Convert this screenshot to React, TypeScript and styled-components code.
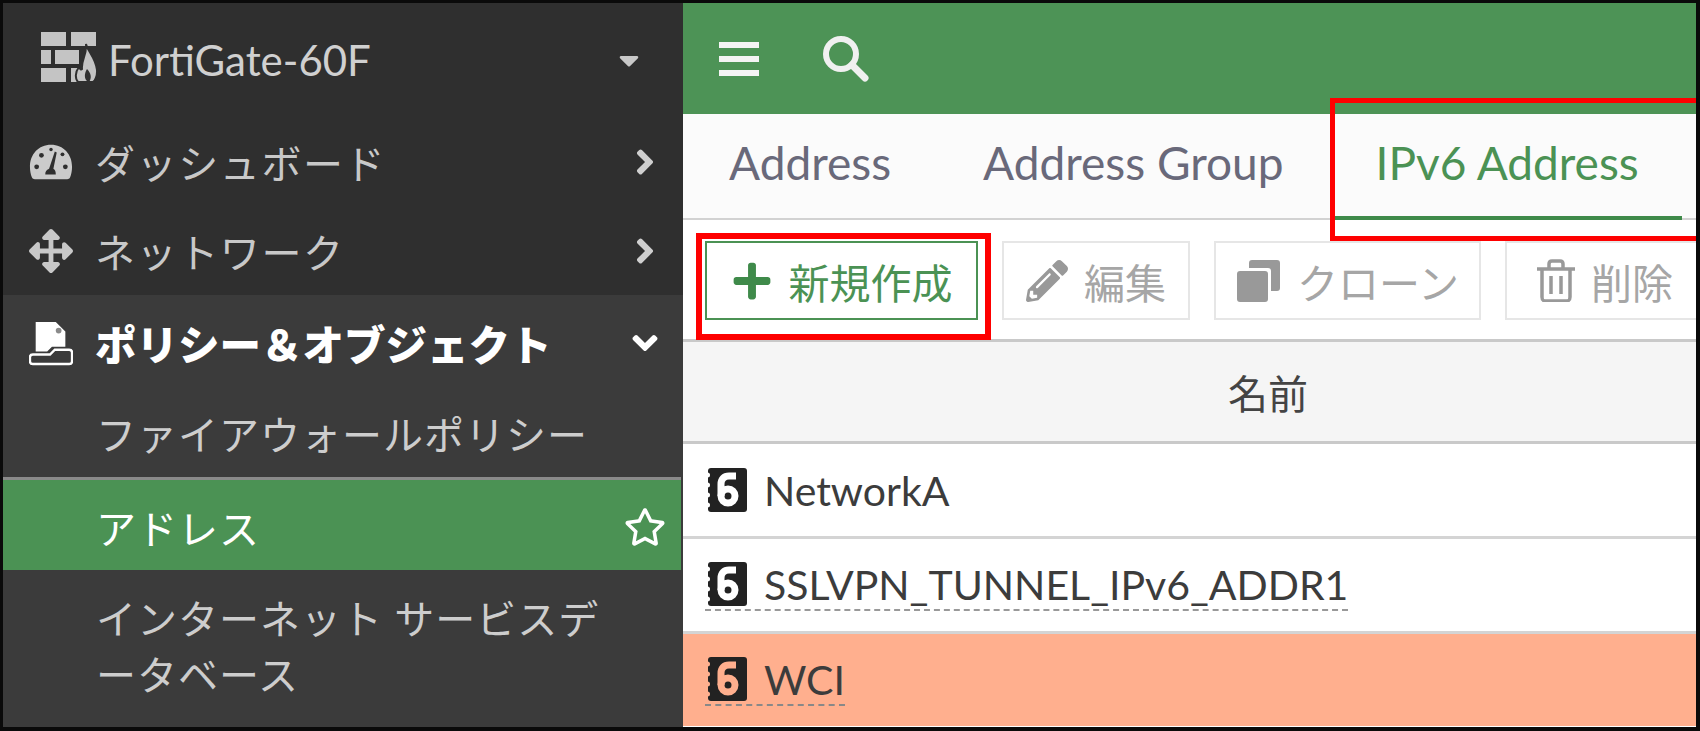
import React from "react";
import styled, { createGlobalStyle } from "styled-components";
import { FaArrowsAlt, FaCaretDown, FaPencilAlt, FaPlus, FaRegStar, FaAngleRight, FaAngleDown } from "react-icons/fa";

const Global = createGlobalStyle`
  html, body { margin: 0; padding: 0; width: 1700px; height: 731px; overflow: hidden; background: #000; }
  * { box-sizing: border-box; }
`;
const font = `"Lato", "Noto Sans CJK JP", sans-serif`;

const Frame = styled.div`
  position: relative; width: 1700px; height: 731px; border: 3px solid #0a0a0a; border-right-width: 4px; border-bottom-width: 4px;
  display: flex; background: #fff; font-family: ${font}; overflow: hidden;
`;
const Sidebar = styled.nav`
  width: 680px; flex: none; background: #2f2f2f; color: #c8c8c8; display: flex; flex-direction: column;
`;
const Brand = styled.div`
  height: 115px; display: flex; align-items: center; padding: 0 38px 1px 37px; font-size: 42px; color: #d0d0d0;
`;
const BrandIcon = styled.span`display: flex; margin-bottom: 6px;`;
const BrandName = styled.span`flex: 1; margin-left: 10px;`;
const MenuRow = styled.div<{ $h: number; $top?: number }>`
  height: ${p => p.$h}px; display: flex; align-items: center; padding: ${p => p.$top || 0}px 18px 0 26px; font-size: 40px;
`;
const Group = styled.div`background: #3b3b3b; flex: 1; display: flex; flex-direction: column;`;
const IconSlot = styled.span`width: 44px; height: 48px; flex: none; display: flex; align-items: center; justify-content: center; margin-right: 22px; font-size: 44px;`;
const MenuText = styled.span<{ $bold?: boolean }>`
  flex: 1; font-weight: ${p => (p.$bold ? 900 : 400)}; color: ${p => (p.$bold ? "#fff" : "inherit")};
  font-size: ${p => (p.$bold ? 41.5 : 40)}px;
  letter-spacing: ${p => (p.$bold ? "0" : "1.6px")};
`;
const Arrow = styled.span<{ $white?: boolean }>`
  font-size: 40px; display: flex; color: ${p => (p.$white ? "#fff" : "#cfcfcf")};
`;
const Caret = styled.span`font-size: 32px; display: flex; color: #c8c8c8;`;
const SubRow = styled.div`
  height: 90px; display: flex; align-items: center; padding: 1px 0 0 93px; font-size: 40px; letter-spacing: 1px; color: #cdcdcd;
`;
const ActiveRow = styled.div`
  height: 93px; background: #4b9254; border-top: 3px solid #8a8a8a; display: flex; align-items: center;
  padding: 3px 15px 0 93px; font-size: 40px; letter-spacing: 1px; color: #fff; margin-right: 2px;
`;
const Grow = styled.span`flex: 1;`;
const WrapRow = styled.div`
  padding: 21px 60px 0 93px; font-size: 40px; letter-spacing: 1px; line-height: 56px; color: #cdcdcd;
`;

const Main = styled.main`flex: 1; min-width: 0; display: flex; flex-direction: column;`;
const TopBar = styled.header`
  height: 111px; flex: none; background: #4d9356; color: #fff; display: flex; align-items: center; padding: 0 0 0 36px; gap: 64px;
`;
const Tabs = styled.div`
  height: 106px; flex: none; background: #fbfbfb; border-bottom: 2px solid #d2d2d2; display: flex; align-items: center; padding: 0 0 8px 46px; font-size: 46px; color: #666;
`;
const Tab = styled.span<{ $active?: boolean; $gap: number }>`
  margin-right: ${p => p.$gap}px; color: ${p => (p.$active ? "#4b9254" : "#69697a")};
`;
const Underline = styled.div`position: absolute; left: 1332px; top: 213px; width: 347px; height: 4px; background: #3f8a4a;`;
const Toolbar = styled.div`
  height: 122px; flex: none; background: #fff; border-bottom: 3px solid #c9c9c9; display: flex; padding: 21px 0 0 22px; gap: 24px; align-items: flex-start;
`;
const Button = styled.div<{ $primary?: boolean; $w: number }>`
  height: 79px; width: ${p => p.$w}px; flex: none; display: flex; align-items: center; justify-content: center; gap: 16px;
  border: 2px solid ${p => (p.$primary ? "#4b9254" : "#e6e6e6")};
  color: ${p => (p.$primary ? "#4b9254" : "#a6a6a6")}; font-size: 41px; background: #fff;
`;
const BtnIcon = styled.span<{ $primary?: boolean }>`display: flex; font-size: 42px; color: ${p => (p.$primary ? "#3f8a4a" : "#999")};`;
const HeadRow = styled.div`
  height: 102px; flex: none; background: #f5f5f5; border-bottom: 3px solid #c9c9c9; display: flex; align-items: center;
  padding-left: 545px; font-size: 40px; color: #444;
`;
const Row = styled.div<{ $bg?: string }>`
  height: ${p => (p.$bg ? 92 : 95)}px; flex: none; background: ${p => p.$bg || "#fff"}; display: flex; align-items: center; padding-left: 22px;
  border-bottom: ${p => (p.$bg ? "none" : "3px solid #d4d4d4")}; font-size: 41px; color: #3c3c3c;
`;
const Dashed = styled.span<{ $dim?: boolean }>`
  display: inline-flex; align-items: center; gap: 17px; border-bottom: 2px dashed ${p => (p.$dim ? "#888" : "#999")}; height: 52px;
`;
const Plain = styled.span`display: inline-flex; align-items: center; gap: 17px; height: 52px;`;
const RedBox = styled.div<{ $x: number; $y: number; $w: number; $h: number; $t: number; $open?: boolean }>`
  position: absolute; left: ${p => p.$x}px; top: ${p => p.$y}px; width: ${p => p.$w}px; height: ${p => p.$h}px;
  border: ${p => p.$t}px solid #fe0000; ${p => (p.$open ? "border-right: none;" : "")}
`;

const FirewallIcon = () => (
  <svg width="58" height="50" viewBox="0 0 58 50">
    <g fill="#c4c4c4">
      <rect x="1" y="0" width="25" height="14" /><rect x="31" y="0" width="25" height="14" />
      <rect x="1" y="18" width="10" height="14" /><rect x="15" y="18" width="24" height="14" />
      <rect x="1" y="36" width="25" height="14" /><rect x="31" y="36" width="7" height="14" />
      <path d="M46 12c1 6 10 14 11 26 .4 6-2 11-4 12H38c-3-3-3-10 1-15 1 2 2 3 3 2-1-9 5-14 4-25z" stroke="#2f2f2f" strokeWidth="2" />
      <path d="M48 50c-4-3-4-8-1-13 4 4 5 9 2 13z" fill="#2f2f2f" />
    </g>
  </svg>
);
const GaugeIcon = () => (
  <svg width="46" height="38" viewBox="0 0 46 38">
    <path d="M23 1C10 1 1 11 1 24c0 4 .7 8 2 11 .5 1.500 2 2 3 2h34c1 0 2.500-.5 3-2 1.300-3 2-7 2-11C45 11 36 1 23 1z" fill="#cbcbcb" />
    <g fill="#2f2f2f">
      <circle cx="8" cy="24" r="2.500" /><circle cx="13" cy="12" r="2.500" /><circle cx="23" cy="6" r="1.800" /><circle cx="35" cy="11" r="2" /><circle cx="38" cy="24" r="2.500" />
      <path d="M27 8l2 1-3.500 17c2 1 2.500 3 2.500 6H17c0-3 1-5 4-6z" />
    </g>
  </svg>
);
const PolicyIcon = () => (
  <svg width="46" height="46" viewBox="0 0 46 46">
    <path d="M7 1h21l10 10v16H24l-5 5H7z" fill="#fff" />
    <circle cx="31" cy="10" r="3" fill="#8a8a8a" />
    <path d="M27 30h15c2 0 3 1 3 3v9c0 2-1 3-3 3H4c-2 0-3-1-3-3v-4c0-2 1-3 3-3h18z" fill="none" stroke="#fff" strokeWidth="2.500" />
  </svg>
);
const V6Icon = ({ bg }: { bg: string }) => (
  <svg width="42" height="44" viewBox="0 0 42 44">
    <rect x="3" y="0" width="39" height="44" rx="3" fill="#222" />
    <g fill={bg}>
      <circle cx="2.500" cy="7" r="2.500" /><circle cx="2.500" cy="17" r="2.500" /><circle cx="2.500" cy="27" r="2.500" /><circle cx="2.500" cy="37" r="2.500" />
    </g>
    <g fill="none" stroke={bg} strokeWidth="7">
      <circle cx="23" cy="28" r="7" />
      <path d="M16 28V16c0-5 3-8 8-8h7" />
    </g>
  </svg>
);
const BarsIcon = () => (
  <svg width="40" height="34" viewBox="0 0 40 34">
    <g fill="#f4f4f4"><rect x="0" y="0" width="40" height="6" /><rect x="0" y="14" width="40" height="6" /><rect x="0" y="28" width="40" height="6" /></g>
  </svg>
);
const SearchIcon = () => (
  <svg width="46" height="46" viewBox="0 0 46 46">
    <circle cx="18" cy="18" r="15" fill="none" stroke="#f0f0f0" strokeWidth="6" />
    <path d="M29 29l13 13" stroke="#f0f0f0" strokeWidth="7" strokeLinecap="round" />
  </svg>
);
const CloneIcon = () => (
  <svg width="45" height="44" viewBox="0 0 45 44">
    <path d="M16 1h25c2 0 3 1 3 3v25c0 2-1 3-3 3h-6V12c0-2-1-3-3-3H13V4c0-2 1-3 3-3z" fill="#999" />
    <rect x="1" y="12" width="31" height="31" rx="3" fill="#999" />
  </svg>
);
const TrashIcon = () => (
  <svg width="38" height="43" viewBox="0 0 38 43" fill="none" stroke="#999" strokeWidth="3.500">
    <path d="M0 10h38M5 10v28c0 3 1 4 4 4h20c3 0 4-1 4-4V10M12 10V5c0-2 1-3 3-3h8c2 0 3 1 3 3v5M14 17v18M24 17v18" />
  </svg>
);

export default function App() {
  return (
    <>
      <Global />
      <Frame>
        <Sidebar>
          <Brand><BrandIcon><FirewallIcon /></BrandIcon><BrandName>FortiGate-60F</BrandName><Caret><FaCaretDown /></Caret></Brand>
          <MenuRow $h={88}><IconSlot><GaugeIcon /></IconSlot><MenuText>ダッシュボード</MenuText><Arrow><FaAngleRight /></Arrow></MenuRow>
          <MenuRow $h={89}><IconSlot><FaArrowsAlt /></IconSlot><MenuText>ネットワーク</MenuText><Arrow><FaAngleRight /></Arrow></MenuRow>
          <Group>
            <MenuRow $h={92} $top={3}><IconSlot><PolicyIcon /></IconSlot><MenuText $bold>ポリシー＆オブジェクト</MenuText><Arrow $white><FaAngleDown /></Arrow></MenuRow>
            <SubRow>ファイアウォールポリシー</SubRow>
            <ActiveRow>アドレス<Grow /><FaRegStar size={42} /></ActiveRow>
            <WrapRow>インターネット サービスデータベース</WrapRow>
          </Group>
        </Sidebar>
        <Main>
          <TopBar><BarsIcon /><SearchIcon /></TopBar>
          <Tabs>
            <Tab $gap={92}>Address</Tab>
            <Tab $gap={92}>Address Group</Tab>
            <Tab $gap={0} $active>IPv6 Address</Tab>
          </Tabs>
          <Toolbar>
            <Button $primary $w={273}><BtnIcon $primary><FaPlus /></BtnIcon>新規作成</Button>
            <Button $w={188}><BtnIcon><FaPencilAlt /></BtnIcon>編集</Button>
            <Button $w={267}><BtnIcon><CloneIcon /></BtnIcon>クローン</Button>
            <Button $w={200}><BtnIcon><TrashIcon /></BtnIcon>削除</Button>
          </Toolbar>
          <HeadRow>名前</HeadRow>
          <Row><Plain><V6Icon bg="#fff" />NetworkA</Plain></Row>
          <Row><Dashed><V6Icon bg="#fff" />SSLVPN_TUNNEL_IPv6_ADDR1</Dashed></Row>
          <Row $bg="#ffaf8e"><Dashed $dim><V6Icon bg="#ffaf8e" />WCI</Dashed></Row>
        </Main>
        <Underline />
        <RedBox $x={1327} $y={95} $w={370} $h={143} $t={5} $open />
        <RedBox $x={693} $y={230} $w={295} $h={107} $t={6} />
      </Frame>
    </>
  );
}
